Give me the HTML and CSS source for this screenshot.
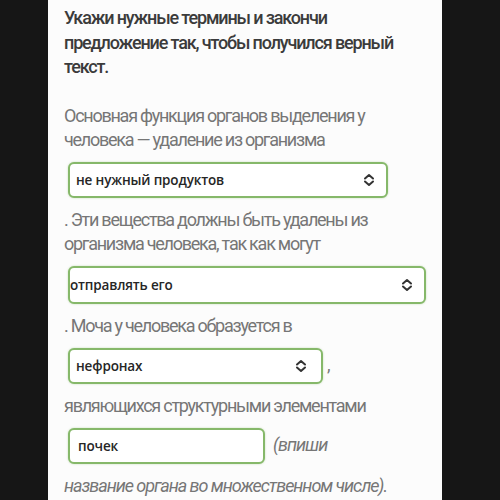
FILE: index.html
```html
<!DOCTYPE html>
<html lang="ru">
<head>
<meta charset="utf-8">
<link rel="stylesheet" href="styles.css">
</head>
<body>
<div class="panel">
  <div class="title">Укажи нужные термины и закончи предложение так, чтобы получился верный текст.</div>
  <div class="text">Основная функция органов выделения у человека — удаление из организма</div>
  <div class="row"><div class="select w1"><span>не нужный продуктов</span><svg class="chev" viewBox="0 0 12 14"><path d="M2 5.5 L6 2 L10 5.5 M2 8.5 L6 12 L10 8.5" fill="none" stroke="#333" stroke-width="2" stroke-linecap="round" stroke-linejoin="round"/></svg></div></div>
  <div class="text">. Эти вещества должны быть удалены из организма человека, так как могут</div>
  <div class="row"><div class="select w2 tight"><span>отправлять его</span><svg class="chev" viewBox="0 0 12 14"><path d="M2 5.5 L6 2 L10 5.5 M2 8.5 L6 12 L10 8.5" fill="none" stroke="#333" stroke-width="2" stroke-linecap="round" stroke-linejoin="round"/></svg></div></div>
  <div class="text">. Моча у человека образуется в</div>
  <div class="row"><div class="select w3"><span>нефронах</span><svg class="chev" viewBox="0 0 12 14"><path d="M2 5.5 L6 2 L10 5.5 M2 8.5 L6 12 L10 8.5" fill="none" stroke="#333" stroke-width="2" stroke-linecap="round" stroke-linejoin="round"/></svg></div><span class="after comma">,</span></div>
  <div class="text">являющихся структурными элементами</div>
  <div class="row"><div class="select w4 input"><span>почек</span></div><span class="after italic">(впиши</span></div>
  <div class="text italic">название органа во множественном числе).</div>
</div>
</body>
</html>
```

FILE: styles.css
```css
html, body {
  margin: 0;
  padding: 0;
  background: #161616;
}
.panel {
  margin-left: 48px;
  width: 394px;
  height: 500px;
  background: #fcfcfc;
  padding: 6px 16px 0 16px;
  box-sizing: border-box;
  overflow: hidden;
  font-family: Roboto, "Liberation Sans", sans-serif;
}
.title {
  font-size: 18px;
  line-height: 24.5px;
  font-weight: 500;
  color: #3b3b3b;
  letter-spacing: -1.15px;
  margin-bottom: 24px;
}
.text {
  font-size: 18px;
  line-height: 24px;
  font-weight: 400;
  color: #767676;
  letter-spacing: -1.25px;
}
.text.italic {
  letter-spacing: -1.05px;
}
.italic {
  font-style: italic;
}
.row {
  display: flex;
  align-items: baseline;
  margin: 10px 0 10px 4px;
}
.select {
  box-sizing: border-box;
  height: 36px;
  border: 2px solid #86b86a;
  border-radius: 6px;
  box-shadow: 0 0 2px rgba(120, 180, 90, 0.45);
  background: #fff;
  display: flex;
  align-items: center;
  justify-content: space-between;
  padding: 0 11px 0 6px;
  font-family: "Open Sans", "Liberation Sans", sans-serif;
  font-size: 13.5px;
  font-weight: 600;
  letter-spacing: -0.15px;
  color: #262626;
}
.select.tight {
  padding-left: 0;
}
.w1 { width: 320px; }
.w2 { width: 360px; height: 38px; }
.w3 { width: 255px; padding-right: 14px; }
.w4 { width: 197px; padding-left: 8px; }
.chev {
  width: 12px;
  height: 14px;
}
.after {
  font-size: 18px;
  color: #767676;
  font-weight: 400;
  margin-left: 8px;
  letter-spacing: -1px;
}
.after.comma {
  margin-left: 4px;
}
```
